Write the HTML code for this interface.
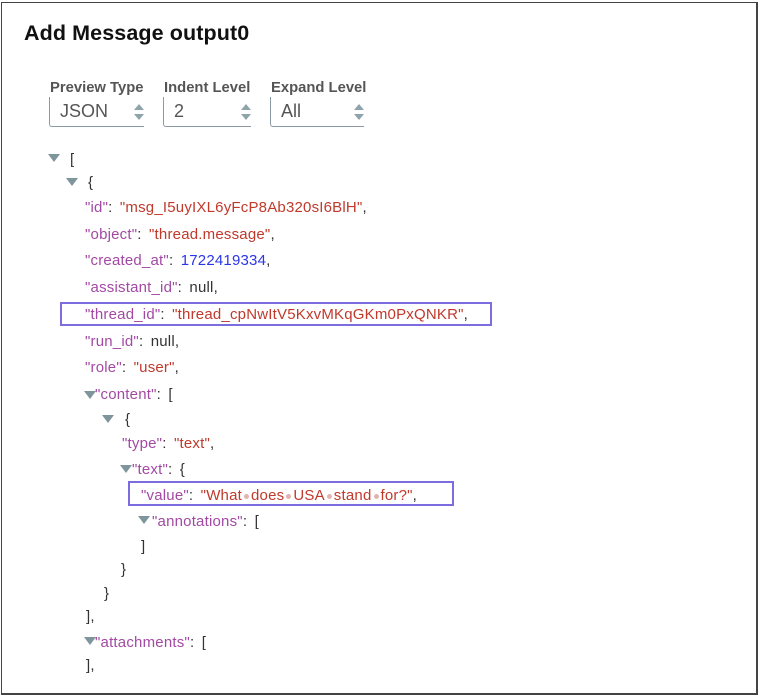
<!DOCTYPE html>
<html><head><meta charset="utf-8"><style>
html,body{margin:0;padding:0;background:#fff;width:760px;height:697px;overflow:hidden}
body{font-family:"Liberation Sans",sans-serif;position:relative}
.frame{position:absolute;left:1px;top:2px;width:757px;height:693px;border:1px solid #444;border-right-width:2px;border-bottom-width:2px;box-sizing:border-box}
h1{position:absolute;left:24px;top:21px;margin:0;font-size:21.5px;font-weight:bold;color:#111;letter-spacing:0.1px}
.lab{position:absolute;top:80px;font-size:14.8px;font-weight:bold;color:#555}
.sel{position:absolute;top:97px;height:30px;border-left:1px solid #8a9aa5;border-bottom:1px solid #8a9aa5;border-radius:0 0 0 3px;box-sizing:border-box;font-size:18px;color:#555;padding:4px 0 0 10px}
.arr{position:absolute;right:0;top:6px;width:10px;height:18px}
.l{position:absolute;font-size:15px;letter-spacing:0.2px;white-space:pre;color:#333;line-height:18px}
.k{color:#a349a4}.s{color:#c0392b}.n{color:#2b35e8}
.c{margin-right:3px}
.t{display:inline-block;width:0;height:0;border-left:6px solid transparent;border-right:6px solid transparent;border-top:8px solid #7f959c;position:absolute}
.box{position:absolute;border:2px solid #7b6de0;box-sizing:border-box}
.dot{display:inline-block;width:5px;height:5px;border-radius:50%;background:#e0b4b0;margin:0 2px;vertical-align:middle}
</style></head><body>
<div class="frame"></div>
<h1>Add Message output0</h1>
<div class="lab" style="left:50px">Preview Type</div>
<div class="lab" style="left:164px">Indent Level</div>
<div class="lab" style="left:271px">Expand Level</div>
<div class="sel" style="left:49px;width:95px">JSON<svg class="arr" viewBox="0 0 10 18"><path d="M0 7L5 1L10 7Z M0 11L5 17L10 11Z" fill="#8fa3ab"/></svg></div>
<div class="sel" style="left:163px;width:88px">2<svg class="arr" viewBox="0 0 10 18"><path d="M0 7L5 1L10 7Z M0 11L5 17L10 11Z" fill="#8fa3ab"/></svg></div>
<div class="sel" style="left:270px;width:94px">All<svg class="arr" viewBox="0 0 10 18"><path d="M0 7L5 1L10 7Z M0 11L5 17L10 11Z" fill="#8fa3ab"/></svg></div>

<span class="t" style="left:48px;top:154px"></span><div class="l" style="left:70px;top:151px">[</div>
<span class="t" style="left:66px;top:178px"></span><div class="l" style="left:88px;top:174px">{</div>
<div class="l" style="left:85px;top:199px"><span class="k">"id"</span><span class="c">:</span> <span class="s">"msg_I5uyIXL6yFcP8Ab320sI6BlH"</span>,</div>
<div class="l" style="left:85px;top:226px"><span class="k">"object"</span><span class="c">:</span> <span class="s">"thread.message"</span>,</div>
<div class="l" style="left:85px;top:252px"><span class="k">"created_at"</span><span class="c">:</span> <span class="n">1722419334</span>,</div>
<div class="l" style="left:85px;top:279px"><span class="k">"assistant_id"</span><span class="c">:</span> null,</div>
<div class="box" style="left:60px;top:302px;width:432px;height:24px"></div>
<div class="l" style="left:85px;top:306px"><span class="k">"thread_id"</span><span class="c">:</span> <span class="s">"thread_cpNwItV5KxvMKqGKm0PxQNKR"</span>,</div>
<div class="l" style="left:85px;top:333px"><span class="k">"run_id"</span><span class="c">:</span> null,</div>
<div class="l" style="left:85px;top:359px"><span class="k">"role"</span><span class="c">:</span> <span class="s">"user"</span>,</div>
<span class="t" style="left:84px;top:391px"></span><div class="l" style="left:95px;top:386px"><span class="k">"content"</span><span class="c">:</span> [</div>
<span class="t" style="left:102px;top:415px"></span><div class="l" style="left:125px;top:411px">{</div>
<div class="l" style="left:122px;top:435px"><span class="k">"type"</span><span class="c">:</span> <span class="s">"text"</span>,</div>
<span class="t" style="left:120px;top:465px"></span><div class="l" style="left:132px;top:461px"><span class="k">"text"</span><span class="c">:</span> {</div>
<div class="box" style="left:128px;top:481px;width:326px;height:25px"></div>
<div class="l" style="left:141px;top:487px"><span class="k">"value"</span><span class="c">:</span> <span class="s">"What<span class="dot"></span>does<span class="dot"></span>USA<span class="dot"></span>stand<span class="dot"></span>for?"</span>,</div>
<span class="t" style="left:138px;top:516px"></span><div class="l" style="left:152px;top:513px"><span class="k">"annotations"</span><span class="c">:</span> [</div>
<div class="l" style="left:141px;top:538px">]</div>
<div class="l" style="left:121px;top:561px">}</div>
<div class="l" style="left:104px;top:585px">}</div>
<div class="l" style="left:86px;top:608px">],</div>
<span class="t" style="left:84px;top:637px"></span><div class="l" style="left:95px;top:634px"><span class="k">"attachments"</span><span class="c">:</span> [</div>
<div class="l" style="left:86px;top:657px">],</div>
</body></html>
